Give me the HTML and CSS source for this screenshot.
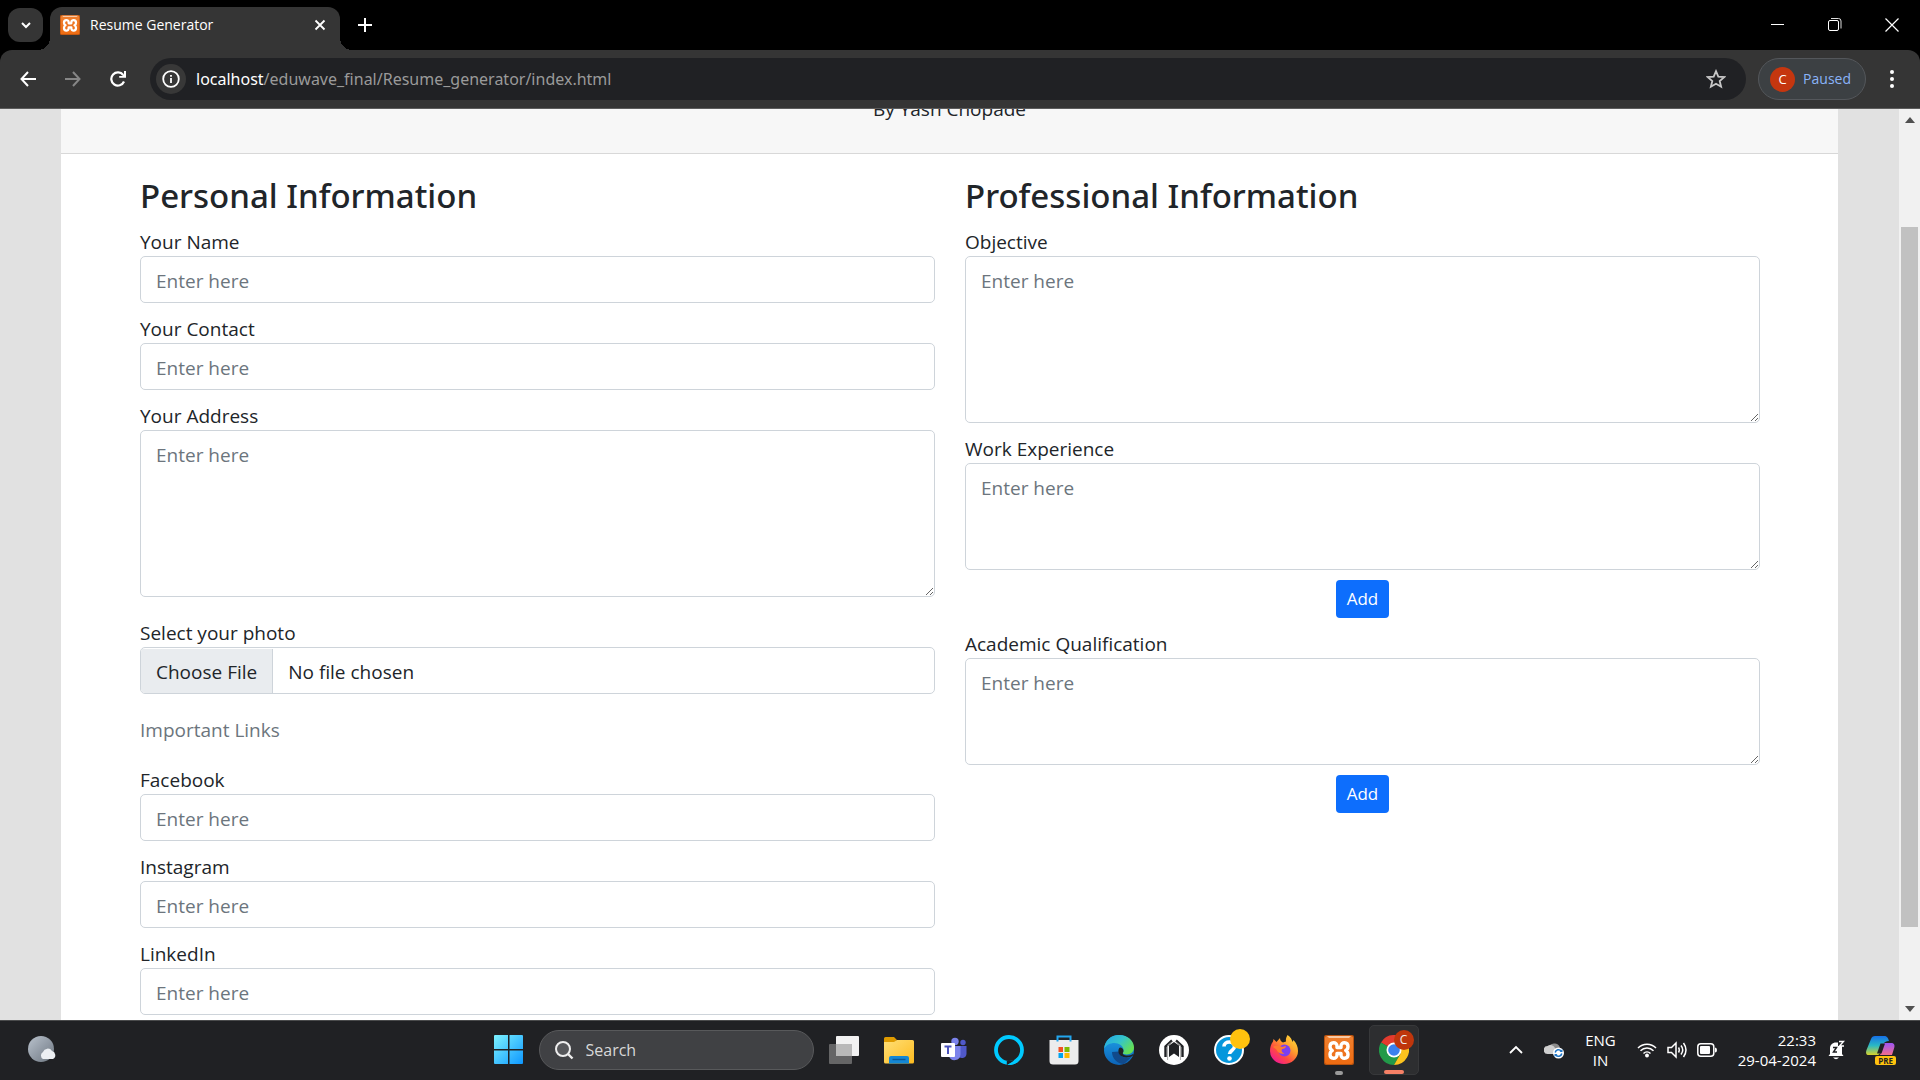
FILE: index.html
```html
<!DOCTYPE html>
<html lang="en">
	<head>
		<meta charset="UTF-8">
		<title>Resume Generator</title>
		<link rel="stylesheet" href="styles.css">
	</head>
	<body>
		<svg class="defs" aria-hidden="true">
			<defs>
				<linearGradient id="g-orange" x1="0" y1="0" x2="0" y2="1">
					<stop offset="0" stop-color="#f0802f"/><stop offset="1" stop-color="#ee6c12"/>
				</linearGradient>
				<symbol id="xampp" viewBox="0 0 30 30">
					<rect width="30" height="30" rx="2" fill="#b9530f"/>
					<rect x="1" y="1" width="28" height="28" rx="2" fill="url(#g-orange)"/>
					<path d="M3 1h24l-2 2H5z" fill="#f9c9a4"/>
					<path d="M13 12.500V11c0-4.500-7-4.500-7 .5 0 2 .8 3.300 2.300 4C6.800 16.200 6 17.500 6 19.500c0 5 7 5 7 .5v-1.500h4V20c0 4.500 7 4.500 7-.5 0-2-.8-3.300-2.300-4 1.500-.7 2.300-2 2.300-4 0-5-7-5-7-.5v1.500z" fill="#ee7420" stroke="#fff" stroke-width="3.400" stroke-linejoin="round"/>
				</symbol>
			</defs>
		</svg>

		<header class="tabstrip">
			<button class="tab-search" aria-label="Search tabs">
				<svg width="12" height="12" viewBox="0 0 12 12"><path d="M2 4l4 4 4-4" fill="none" stroke="#fff" stroke-width="2"/></svg>
			</button>
			<div class="tab">
				<svg width="20" height="20"><use href="#xampp"/></svg>
				<span class="tab-title">Resume Generator</span>
				<button class="plain" aria-label="Close tab">
					<svg width="12" height="12" viewBox="0 0 12 12"><path d="M1.500 1.500l9 9M10.500 1.500l-9 9" stroke="#fff" stroke-width="1.800"/></svg>
				</button>
			</div>
			<button class="plain new-tab" aria-label="New tab">
				<svg width="14" height="14" viewBox="0 0 14 14"><path d="M7 0v14M0 7h14" stroke="#fff" stroke-width="2"/></svg>
			</button>
			<div class="window-buttons">
				<button class="plain" aria-label="Minimize">
					<svg width="14" height="14" viewBox="0 0 14 14"><path d="M0 6.500h13" stroke="#fff"/></svg>
				</button>
				<button class="plain" aria-label="Restore">
					<svg width="14" height="14" viewBox="0 0 14 14"><rect x=".5" y="2.500" width="10" height="10" rx="1.500" fill="none" stroke="#fff"/><path d="M3 .5h7.500q2.500 0 2.500 2.500v7.500" fill="none" stroke="#ddd"/></svg>
				</button>
				<button class="plain" aria-label="Close">
					<svg width="14" height="14" viewBox="0 0 14 14"><path d="M.5 .5l13 13M13.500 .5l-13 13" stroke="#fff" stroke-width="1.200"/></svg>
				</button>
			</div>
		</header>

		<nav class="toolbar">
			<button class="plain" aria-label="Back">
				<svg width="16" height="16" viewBox="0 0 16 16"><path d="M16 8H1.500M8 1L1.500 8 8 15" fill="none" stroke="#fff" stroke-width="2"/></svg>
			</button>
			<button class="plain" aria-label="Forward">
				<svg width="16" height="16" viewBox="0 0 16 16"><path d="M0 8h14.500M8 1l6.500 7L8 15" fill="none" stroke="#868686" stroke-width="2"/></svg>
			</button>
			<button class="plain" aria-label="Reload">
				<svg width="16" height="16" viewBox="0 0 16 16"><path d="M14 10.500A6.600 6.600 0 1 1 13.200 4" fill="none" stroke="#fff" stroke-width="2.200"/><path d="M16 0v6.800H9.200V5h3L14 3V0z" fill="#fff"/></svg>
			</button>
			<div class="omnibox">
				<button class="site-info" aria-label="View site information">
					<svg width="18" height="18" viewBox="0 0 18 18"><circle cx="9" cy="9" r="7.800" fill="none" stroke="#fff" stroke-width="1.800"/><path d="M9 8v5M9 5v1.800" stroke="#fff" stroke-width="1.800"/></svg>
				</button>
				<span class="url"><b>localhost</b>/eduwave_final/Resume_generator/index.html</span>
				<button class="plain star" aria-label="Bookmark this tab">
					<svg width="20" height="20" viewBox="0 0 20 20"><path d="M10 2.200l2.300 5.400 5.900.5-4.500 3.900 1.400 5.700-5.100-3-5.100 3L6.300 12 1.800 8.100l5.900-.5z" fill="none" stroke="#c7c7c7" stroke-width="1.800"/></svg>
				</button>
			</div>
			<button class="profile"><span class="avatar">C</span>Paused</button>
			<button class="plain menu" aria-label="Menu">
				<svg width="4" height="18" viewBox="0 0 4 18" fill="#fff"><circle cx="2" cy="2" r="2"/><circle cx="2" cy="9" r="2"/><circle cx="2" cy="16" r="2"/></svg>
			</button>
		</nav>

		<div class="viewport">
			<main class="page">
				<div class="card">
					<div class="card-header">
						<p>By Yash Chopade</p>
					</div>
					<form class="row">
						<section class="col">
							<h3>Personal Information</h3>
							<div class="form-group">
								<label for="name">Your Name</label>
								<input type="text" id="name" class="form-control" placeholder="Enter here">
							</div>
							<div class="form-group">
								<label for="contact">Your Contact</label>
								<input type="text" id="contact" class="form-control" placeholder="Enter here">
							</div>
							<div class="form-group">
								<label for="address">Your Address</label>
								<textarea id="address" class="form-control" rows="5" placeholder="Enter here"></textarea>
							</div>
							<div class="form-group photo">
								<label for="photo">Select your photo</label>
								<input type="file" id="photo" class="form-control">
							</div>
							<p class="secondary">Important Links</p>
							<div class="form-group">
								<label for="facebook">Facebook</label>
								<input type="text" id="facebook" class="form-control" placeholder="Enter here">
							</div>
							<div class="form-group">
								<label for="instagram">Instagram</label>
								<input type="text" id="instagram" class="form-control" placeholder="Enter here">
							</div>
							<div class="form-group">
								<label for="linkedin">LinkedIn</label>
								<input type="text" id="linkedin" class="form-control" placeholder="Enter here">
							</div>
						</section>
						<section class="col">
							<h3>Professional Information</h3>
							<div class="form-group">
								<label for="objective">Objective</label>
								<textarea id="objective" class="form-control" rows="5" placeholder="Enter here"></textarea>
							</div>
							<div class="form-group">
								<label for="work">Work Experience</label>
								<textarea id="work" class="form-control" rows="3" placeholder="Enter here"></textarea>
								<button type="button" class="btn">Add</button>
							</div>
							<div class="form-group">
								<label for="academic">Academic Qualification</label>
								<textarea id="academic" class="form-control" rows="3" placeholder="Enter here"></textarea>
								<button type="button" class="btn">Add</button>
							</div>
						</section>
					</form>
				</div>
			</main>
			<div class="scrollbar" aria-hidden="true">
				<svg width="10" height="6" viewBox="0 0 10 6"><path d="M0 6l5-6 5 6z" fill="#505050"/></svg>
				<div class="track"><div class="thumb"></div></div>
				<svg width="10" height="6" viewBox="0 0 10 6"><path d="M0 0l5 6 5-6z" fill="#505050"/></svg>
			</div>
		</div>

		<footer class="taskbar">
			<button class="plain weather" aria-label="Weather">
				<svg width="30" height="30" viewBox="0 0 30 30">
					<linearGradient id="g-moon" x1="0" y1="0" x2="1" y2="1"><stop offset="0" stop-color="#b9c2cd"/><stop offset="1" stop-color="#6d7680"/></linearGradient>
					<circle cx="13" cy="14" r="13" fill="url(#g-moon)"/>
					<path d="M15 24a4 4 0 0 1 0-7 5 5 0 0 1 9-1 4.300 4.300 0 0 1 1 8z" fill="#eceff3"/>
				</svg>
			</button>

			<div class="apps">
				<button class="app" aria-label="Start">
					<svg width="30" height="30" viewBox="0 0 30 30">
						<linearGradient id="g-win" gradientUnits="userSpaceOnUse" x1="0" y1="0" x2="30" y2="30"><stop offset="0" stop-color="#7df3ff"/><stop offset="1" stop-color="#0a94ff"/></linearGradient>
						<path d="M0 1a1 1 0 0 1 1-1h13v14H0zM15.500 0H28a1 1 0 0 1 1 1v13H15.500zM0 15.500h14V29H1a1 1 0 0 1-1-1zM15.500 15.500H29V28a1 1 0 0 1-1 1H15.500z" fill="url(#g-win)"/>
					</svg>
				</button>
				<label class="search">
					<svg width="20" height="20" viewBox="0 0 20 20"><circle cx="9" cy="9" r="7" fill="#57585b" stroke="#eee" stroke-width="2"/><path d="M14 14l4.500 4.500" stroke="#eee" stroke-width="2.400"/></svg>
					<input type="search" placeholder="Search" aria-label="Search">
				</label>
				<button class="app" aria-label="Task View">
					<svg width="30" height="30" viewBox="0 0 30 30"><rect x="7" y="1" width="23" height="20" rx="1" fill="#f2f2f2"/><rect x="0" y="9" width="23" height="20" rx="1" fill="#777" fill-opacity=".8"/><rect x="7" y="9" width="16" height="12" fill="#b9b9b9"/></svg>
				</button>
				<button class="app" aria-label="File Explorer">
					<svg width="30" height="30" viewBox="0 0 30 30">
						<linearGradient id="g-folder" x1="0" y1="0" x2="1" y2="1"><stop offset="0" stop-color="#ffdf76"/><stop offset="1" stop-color="#fdbb1f"/></linearGradient>
						<path d="M0 3.500A1.500 1.500 0 0 1 1.500 2H10l3 3-3 4H0z" fill="#df9b00"/>
						<path d="M0 7h10l3-2h15.500A1.500 1.500 0 0 1 30 6.500V27a1.500 1.500 0 0 1-1.500 1.500h-27A1.500 1.500 0 0 1 0 27z" fill="url(#g-folder)"/>
						<path d="M5 28.500V23a2 2 0 0 1 2-2h16a2 2 0 0 1 2 2v5.500z" fill="#1487d4"/>
						<path d="M8.500 24.500h13" stroke="#0b5796" stroke-width="1.400"/>
					</svg>
				</button>
				<button class="app" aria-label="Microsoft Teams">
					<svg width="30" height="30" viewBox="0 0 30 30">
						<circle cx="24" cy="7.500" r="2.700" fill="#5059c9"/><path d="M19 11h8.500v8a4.500 4.500 0 0 1-8.500 1.500z" fill="#5059c9"/>
						<circle cx="16" cy="6.500" r="3.700" fill="#7b83eb"/><path d="M10 11h11.500v8.500a6 6 0 0 1-11.500 2z" fill="#7b83eb"/>
						<rect x="2" y="8" width="14" height="14" rx="1" fill="#fff"/><path d="M5.500 11.500h7M9 11.500v7.500" stroke="#4b53bc" stroke-width="2"/>
					</svg>
				</button>
				<button class="app" aria-label="Alexa">
					<svg width="30" height="30" viewBox="0 0 30 30"><circle cx="15" cy="15" r="13" fill="none" stroke="#00caff" stroke-width="3.800"/><path d="M12.800 30v-4.500c2 1 5 .6 8-1.500-1 2-3.500 4-8 6z" fill="#202124"/><path d="M14 30c1-2 6-3 8.500-6l2 2.500q-4 3.500-10.500 3.500z" fill="#00caff"/></svg>
				</button>
				<button class="app" aria-label="Microsoft Store">
					<svg width="30" height="30" viewBox="0 0 30 30">
						<path d="M.5 5h29v21a3.500 3.500 0 0 1-3.500 3.500H4A3.500 3.500 0 0 1 .5 26z" fill="#ececec"/>
						<path d="M8.500 6.500v-5h13v5" fill="none" stroke="#22a6ee" stroke-width="2"/>
						<path d="M9.500 12H14v5H9.500z" fill="#f25022"/><path d="M15.500 12h5v5h-5z" fill="#7fba00"/><path d="M9.500 18H14v5H9.500z" fill="#00a4ef"/><path d="M15.500 18h5v5h-5z" fill="#ffb900"/>
					</svg>
				</button>
				<button class="app" aria-label="Microsoft Edge">
					<svg width="30" height="30" viewBox="0 0 30 30">
						<linearGradient id="g-edge" x1="0" y1="0" x2="1" y2=".6"><stop offset="0" stop-color="#22a5ea"/><stop offset=".55" stop-color="#35c5c9"/><stop offset="1" stop-color="#66e052"/></linearGradient>
						<linearGradient id="g-edge2" x1="0" y1="0" x2="0" y2="1"><stop offset="0" stop-color="#1ea0e8"/><stop offset="1" stop-color="#0c64b8"/></linearGradient>
						<circle cx="15" cy="15" r="15" fill="url(#g-edge2)"/>
						<path d="M8 17c0 6 5 12 12 12l8-7.500c-3 2-13 2-13-5z" fill="#114a8b"/>
						<path d="M0 14C1 5 7 0 15 0c9 0 15 6 15 12.500 0 6-6 8-10 6.500-2-.8-.5-1.500-.5-4C19.500 11 15 8 10.500 8 6 8 2 10 0 14z" fill="url(#g-edge)"/>
						<path d="M16 12.500c2 0 3.500 1.500 3.500 3.500 0 1.300-1.200 2-.5 3 1.500 2 6.500 2.300 10 0 .5 0 .5.500-.5 2-6 3-13.500 1-14-4-.2-2 0-3.500 1.500-4.500z" fill="#202124"/>
					</svg>
				</button>
				<button class="app" aria-label="Launcher">
					<svg width="30" height="30" viewBox="0 0 30 30"><circle cx="15" cy="15" r="15" fill="#fff"/><path d="M6.500 22V11.500L13 5.500M23.500 22V11.500L17 5.500" fill="none" stroke="#202124" stroke-width="2.400"/><path d="M10 22V10.500L15 7l5 3.500V22l-5-3.500z" fill="#202124"/><path d="M8.600 25V10.500l5-4M21.400 25V10.500l-5-4" fill="none" stroke="#aaa"/></svg>
				</button>
				<button class="app" aria-label="Help">
					<svg width="30" height="30" viewBox="0 0 30 30"><circle cx="15" cy="15" r="14" fill="#0697dc" stroke="#fff" stroke-width="2"/><path d="M10 11.500c0-6 10.500-6 10.500 0 0 4-5 4-5 7.500" fill="none" stroke="#fff" stroke-width="3.600"/><circle cx="15.500" cy="23.500" r="2.300" fill="#fff"/></svg>
					<span class="badge badge-yellow"></span>
				</button>
				<button class="app" aria-label="Firefox">
					<svg width="30" height="30" viewBox="0 0 30 30">
						<linearGradient id="g-fox" x1="1" y1="0" x2=".2" y2="1"><stop offset="0" stop-color="#ffe83e"/><stop offset=".4" stop-color="#ffa22c"/><stop offset=".7" stop-color="#ff4a42"/><stop offset="1" stop-color="#f0159a"/></linearGradient>
						<path d="M18.500 0c3 2 4.500 4.500 5 7l1-2c3 3 4.500 7 4.500 11a14 13 0 0 1-28 0c0-4 1-7 3-9.500L4.500 4l3 3 3.500-4c0 2 1 3.500 3 4.500l3-1c-.5-2.500.5-4.500 1.500-6.500z" fill="url(#g-fox)"/>
						<circle cx="15.500" cy="15.500" r="6" fill="#7b3ff0"/>
						<path d="M4 12c3-2 7-1 9 0l4-1c0 2-2 3-4 3-1 1.500 0 4 2.500 4.500-4 1-7-1-8-4z" fill="#ff7a2f"/>
					</svg>
				</button>
				<button class="app running" aria-label="XAMPP">
					<svg width="30" height="30"><use href="#xampp"/></svg>
				</button>
				<button class="app active" aria-label="Google Chrome">
					<svg width="30" height="30" viewBox="0 0 30 30">
						<path d="M15 15L2 7.500A15 15 0 0 1 28 7.500H15z" fill="#e33b2e"/>
						<path d="M15 15L2 7.500A15 15 0 0 0 15 30l6.500-11.300z" fill="#229a49"/>
						<path d="M15 7.500h13A15 15 0 0 1 15 30l6.500-11.300z" fill="#fcc31e"/>
						<circle cx="15" cy="15" r="7.500" fill="#fff"/><circle cx="15" cy="15" r="5.800" fill="#3b80ef"/>
					</svg>
					<span class="badge badge-red">C</span>
				</button>
			</div>

			<div class="tray">
				<button class="plain" aria-label="Show hidden icons">
					<svg width="14" height="10" viewBox="0 0 14 10"><path d="M1 8l6-6 6 6" fill="none" stroke="#fff" stroke-width="1.800"/></svg>
				</button>
				<button class="plain" aria-label="OneDrive">
					<svg width="20" height="18" viewBox="0 0 20 18">
						<path d="M5 5a6 5.500 0 0 1 11 2l-7 6z" fill="#8b8b8b"/><path d="M4 13a4 4 0 0 1-.5-8A5 5 0 0 1 11 7l4 6z" fill="#cfcfcf"/>
						<circle cx="14.500" cy="12" r="5.500" fill="#fff"/><path d="M11.200 11.500a3.400 3.400 0 0 1 6-1.500M17.800 12.500a3.400 3.400 0 0 1-6 1.500" fill="none" stroke="#1c73c4" stroke-width="1.500"/><path d="M18.500 8v3h-3zM10.500 16v-3h3z" fill="#1c73c4"/>
					</svg>
				</button>
				<button class="plain lang">ENG<br>IN</button>
				<div class="net">
					<svg width="20" height="16" viewBox="0 0 20 16" fill="none" stroke="#fff" stroke-width="1.500"><path d="M1 6a12.500 12.500 0 0 1 18 0M3.500 8.800a9 9 0 0 1 13 0M6.500 11.500a5 5 0 0 1 7 0"/><circle cx="10" cy="13.500" r="1.200" fill="#fff"/></svg>
					<svg width="20" height="18" viewBox="0 0 20 18" fill="none" stroke="#fff" stroke-width="1.500"><path d="M1 6.500h3.500L9 2v14l-4.500-4.500H1z"/><path d="M11.500 6.500q1.500 2.500 0 5M14 4.500q3.500 4.500 0 9M16.500 2q5 7 0 14"/></svg>
					<svg width="20" height="14" viewBox="0 0 20 14"><rect x=".8" y=".8" width="16" height="12.400" rx="3" fill="none" stroke="#fff" stroke-width="1.500"/><rect x="3" y="3" width="10" height="8" rx="1" fill="#fff"/><path d="M18 4.500q2 0 2 2.500t-2 2.500z" fill="#fff"/></svg>
				</div>
				<div class="clock-group">
					<button class="plain clock">22:33<br>29-04-2024</button>
					<svg width="17" height="20" viewBox="0 0 17 20"><path d="M2 14V8.500C2 5 4.500 2.500 8 2.500h2V6h4v8l1.500 2H.5z" fill="#fff"/><path d="M5 17.500h6q-3 3.500-6 0z" fill="#fff"/><path d="M5 7.500h3.500L5.500 12H9" fill="none" stroke="#202124" stroke-width="1.500"/><path d="M11 1.500h4.500l-4 4.500H16" fill="none" stroke="#fff" stroke-width="1.400"/></svg>
				</div>
				<button class="plain copilot" aria-label="Copilot">
					<svg width="30" height="30" viewBox="0 0 30 30">
						<linearGradient id="g-cop" x1="0" y1="0" x2="0" y2="1"><stop offset="0" stop-color="#1670e8"/><stop offset=".5" stop-color="#2ab8c4"/><stop offset="1" stop-color="#d8d32a"/></linearGradient>
						<linearGradient id="g-cop2" x1="0" y1="0" x2="0" y2="1"><stop offset="0" stop-color="#9c55f5"/><stop offset="1" stop-color="#f56d8c"/></linearGradient>
						<path d="M17 8h8c3 0 4 2 3.300 4.500L26 20H14l3-8z" fill="url(#g-cop2)"/>
						<path d="M9 1h9c3 0 4 1.500 5 5-3 0-5 1-6 4l-3 8c-.5 1.500-1.500 2-3 2H3c-3 0-3.500-2-2.500-5L5 4c.7-2 2-3 4-3z" fill="url(#g-cop)"/>
						<path d="M14.500 8.500h4.500l-3.500 10H11z" fill="#202124"/>
					</svg>
					<span class="pre">PRE</span>
				</button>
			</div>
		</footer>
	</body>
</html>
```
FILE: styles.css
```css
* {
	box-sizing: border-box;
}
body {
	margin: 0;
	height: 100vh;
	display: flex;
	flex-direction: column;
	overflow: hidden;
	background-color: #000;
	color: #212529;
	font-family: "Open Sans", "Noto Sans", sans-serif;
	font-size: 19px;
	line-height: 30px;
}
button, input, textarea {
	font: inherit;
	color: inherit;
}
svg {
	display: block;
	flex: none;
}
h3, p {
	margin: 0;
}
.defs {
	position: absolute;
	width: 0;
	height: 0;
}
.plain {
	display: flex;
	align-items: center;
	justify-content: center;
	padding: 0;
	border: 0;
	background: none;
}

/* tab strip */
.tabstrip {
	display: flex;
	align-items: center;
	height: 50px;
	padding-left: 8px;
	flex: none;
}
.tab-search {
	display: flex;
	align-items: center;
	justify-content: center;
	width: 35px;
	height: 34px;
	margin-right: 7px;
	padding: 0;
	border: 0;
	border-radius: 12px;
	background-color: #353535;
}
.tab {
	position: relative;
	display: flex;
	align-items: center;
	align-self: flex-end;
	width: 290px;
	height: 43px;
	padding: 0 14px 7px 10px;
	border-radius: 12px 12px 0 0;
	background-color: #353535;
	color: #fff;
	font-size: 14px;
}
.tab::before, .tab::after {
	content: "";
	position: absolute;
	bottom: 0;
	width: 12px;
	height: 12px;
}
.tab::before {
	right: 100%;
	background: radial-gradient(circle at 0 0, transparent 12px, #353535 12px);
}
.tab::after {
	left: 100%;
	background: radial-gradient(circle at 100% 0, transparent 12px, #353535 12px);
}
.tab-title {
	flex: 1;
	margin-left: 10px;
}
.new-tab {
	width: 50px;
	height: 50px;
}
.window-buttons {
	display: flex;
	margin-left: auto;
}
.window-buttons .plain {
	width: 57px;
	height: 50px;
}

/* toolbar */
.toolbar {
	display: flex;
	align-items: center;
	height: 59px;
	flex: none;
	padding: 0 8px 0 5px;
	border-bottom: 1px solid #5c5c5c;
	border-radius: 12px 12px 0 0;
	background-color: #353535;
}
.toolbar > .plain {
	width: 45px;
	height: 42px;
}
.omnibox {
	display: flex;
	flex: 1;
	align-items: center;
	height: 42px;
	margin: 0 12px 0 10px;
	padding: 0 20px 0 6px;
	border-radius: 21px;
	background-color: #202124;
}
.site-info {
	display: flex;
	align-items: center;
	justify-content: center;
	width: 30px;
	height: 30px;
	padding: 0;
	border: 0;
	border-radius: 50%;
	background-color: #383838;
}
.url {
	flex: 1;
	margin-left: 10px;
	color: #9a9a9a;
	font-family: "Noto Sans", sans-serif;
	font-size: 16px;
}
.url b {
	color: #fff;
	font-weight: 400;
}
.profile {
	display: flex;
	align-items: center;
	gap: 8px;
	height: 42px;
	padding: 0 14px 0 11px;
	border: 1px solid #54575b;
	border-radius: 21px;
	background-color: #3c4043;
	color: #8ab4f8;
	font-size: 14px;
}
.avatar {
	width: 25px;
	height: 25px;
	border-radius: 50%;
	background-color: #c5360f;
	color: #fff;
	font-size: 13px;
	line-height: 25px;
	text-align: center;
}
.toolbar > .menu {
	width: 40px;
	margin-left: 6px;
}

/* page */
.viewport {
	display: flex;
	flex: 1;
	min-height: 0;
	overflow: hidden;
	background-color: #e1e1e1;
}
.page {
	flex: 1;
	padding: 0 61px;
}
.card {
	min-height: 100%;
	background-color: #fff;
}
.card-header {
	display: flex;
	align-items: flex-end;
	justify-content: center;
	height: 45px;
	padding-bottom: 29px;
	overflow: hidden;
	border-bottom: 1px solid #d8d8d8;
	background-color: #f7f7f7;
}
.row {
	display: grid;
	grid-template-columns: 1fr 1fr;
	gap: 30px;
	padding: 21px 78px 0 79px;
}
h3 {
	margin-bottom: 9px;
	font-family: "Noto Sans", sans-serif;
	font-size: 33px;
	font-weight: 500;
	line-height: 42px;
}
.form-group {
	margin-bottom: 10px;
}
.form-group label {
	display: block;
	padding-top: 2px;
	line-height: 28px;
}
.form-control {
	display: block;
	width: 100%;
	padding: 9px 15px 6px;
	border: 1px solid #ced4da;
	border-radius: 5px;
	background-color: #fff;
	line-height: 30px;
}
input.form-control {
	height: 47px;
}
.form-control::placeholder {
	color: #6c757d;
}
.form-control::file-selector-button {
	height: 45px;
	margin: -9px 15px -6px -15px;
	padding: 1px 15px 0;
	border: 0;
	border-right: 1px solid #ced4da;
	background-color: #e9ecef;
	color: #212529;
	font: inherit;
}
.photo {
	margin: 20px 0;
}
.secondary {
	padding-top: 2px;
	margin-bottom: 20px;
	color: #6c757d;
	line-height: 28px;
}
.btn {
	display: block;
	height: 38px;
	margin: 10px auto 0;
	padding: 0 11px;
	border: 0;
	border-radius: 4px;
	background-color: #0d6efd;
	color: #fff;
	font-size: 17px;
}
.scrollbar {
	display: flex;
	flex-direction: column;
	align-items: center;
	width: 21px;
	padding: 8px 0;
	background-color: #f1f1f1;
}
.track {
	flex: 1;
	width: 17px;
	padding: 104px 0 79px;
}
.thumb {
	height: 100%;
	background-color: #c1c1c1;
}

/* taskbar */
.taskbar {
	display: grid;
	grid-template-columns: 1fr auto 1fr;
	align-items: center;
	height: 60px;
	flex: none;
	box-shadow: inset 0 1px #4a4b4c;
	background-color: #202124;
	color: #fff;
	font-size: 15px;
	line-height: 20px;
}
.weather {
	margin-left: 28px;
	justify-self: start;
}
.apps {
	display: flex;
	align-items: center;
	gap: 5px;
	padding-right: 18px;
}
.app {
	position: relative;
	display: flex;
	align-items: center;
	justify-content: center;
	width: 50px;
	height: 50px;
	padding: 0;
	border: 0;
	border-radius: 5px;
	background: none;
}
.app.active {
	border: 1px solid #37383a;
	background-color: #2d2e30;
}
.app.running::after, .app.active::after {
	content: "";
	position: absolute;
	bottom: 0;
	width: 8px;
	height: 4px;
	border-radius: 2px;
	background-color: #9a9a9a;
}
.app.active::after {
	width: 20px;
	background-color: #f58066;
}
.badge {
	position: absolute;
	top: 4px;
	right: 4px;
	width: 20px;
	height: 20px;
	border-radius: 50%;
	font-size: 12px;
	line-height: 20px;
}
.badge-yellow {
	background-color: #ffc20e;
}
.badge-red {
	background-color: #bf360c;
	color: #eee;
}
.search {
	display: flex;
	align-items: center;
	gap: 12px;
	width: 275px;
	height: 40px;
	padding: 0 14px;
	border: 1px solid #58595b;
	border-radius: 20px;
	background-color: #404144;
}
.search input {
	flex: 1;
	min-width: 0;
	padding: 0;
	border: 0;
	outline: 0;
	background: none;
	font-size: 16px;
}
.search input::placeholder {
	color: #d8d8d8;
}
.tray {
	display: flex;
	align-items: center;
	justify-content: flex-end;
	gap: 21px;
	padding-right: 24px;
}
.net {
	display: flex;
	align-items: center;
	gap: 10px;
}
.clock-group {
	display: flex;
	align-items: center;
	gap: 12px;
}
.clock {
	text-align: right;
}
.copilot {
	position: relative;
}
.pre {
	position: absolute;
	right: 0;
	bottom: 0;
	padding: 0 3px;
	border-radius: 2px;
	background-color: #ffc20e;
	color: #222;
	font-size: 8px;
	font-weight: 700;
	line-height: 9px;
}
```
